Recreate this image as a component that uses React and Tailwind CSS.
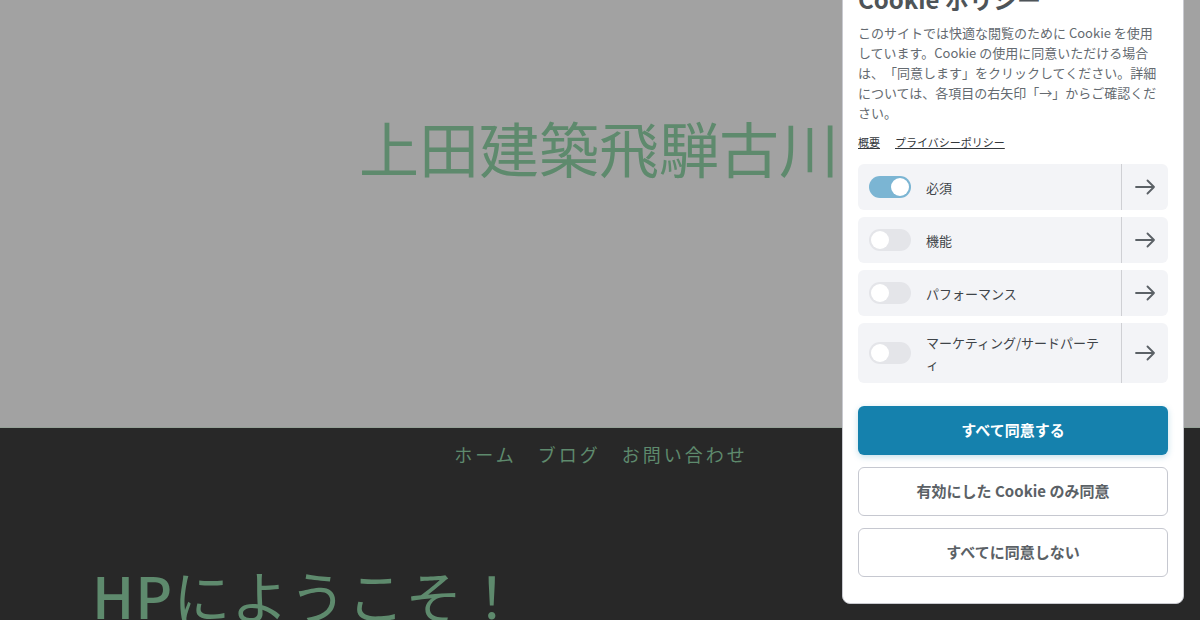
import React from 'react';

const font = { fontFamily: '"Noto Sans CJK JP", "Noto Sans", sans-serif' };

function Arrow() {
    return (
        <svg width="20" height="16" viewBox="0 0 20 16" fill="none" stroke="#5b6166" strokeWidth="1.8" strokeLinecap="round" strokeLinejoin="round">
            <path d="M1 8 H19 M12.5 1.5 L19 8 L12.5 14.5" />
        </svg>
    );
}

function Toggle({ on }) {
    return (
        <div className={`w-[42px] h-[22px] rounded-full flex items-center px-[2px] shrink-0 ${on ? 'bg-[#7bb5d3] justify-end' : 'bg-[#e4e5e9] justify-start'}`}>
            <div className="w-[18px] h-[18px] rounded-full bg-white"></div>
        </div>
    );
}

const rows = [
    { label: '必須', on: true },
    { label: '機能', on: false },
    { label: 'パフォーマンス', on: false },
    { label: 'マーケティング/サードパーティ', on: false },
];

function CookiePanel() {
    return (
        <div className="absolute top-[-34px] right-[16px] w-[342px] bg-white rounded-[8px] border border-[#c9cad0] px-[15px] pt-[16px] pb-[26px] text-[#5f6368]">
            <h2 className="text-[24px] leading-[32px] font-bold text-[#4e5458]">Cookie ポリシー</h2>
            <p className="mt-[8px] w-[305px] text-[13px] leading-[20px] text-[#646a70] [text-spacing-trim:space-all]">
                このサイトでは快適な閲覧のために Cookie を使用しています。Cookie の使用に同意いただける場合は、「同意します」をクリックしてください。詳細については、各項目の右矢印「→」からご確認ください。
            </p>
            <div className="mt-[11px] flex gap-[15px] text-[11px] leading-[16px] text-[#33373b] underline">
                <span>概要</span>
                <span>プライバシーポリシー</span>
            </div>
            <div className="mt-[14px] flex flex-col gap-[7px]">
                {rows.map((r, i) => (
                    <div key={i} className="flex bg-[#f3f4f7] rounded-[6px] min-h-[46px]">
                        <div className="flex-1 flex items-center gap-[15px] pl-[11px] pr-[12px] py-[9px]">
                            <Toggle on={r.on} />
                            <span className="text-[13px] leading-[21px] text-[#3f4449]">{r.label}</span>
                        </div>
                        <div className="w-[47px] border-l border-[#cfd0d4] flex items-center justify-center shrink-0">
                            <Arrow />
                        </div>
                    </div>
                ))}
            </div>
            <div className="mt-[23px] flex flex-col gap-[12px]">
                <button className="h-[49px] rounded-[6px] bg-[#1581ad] text-white font-bold text-[15px] shadow-[0_2px_6px_rgba(21,129,173,0.25)]">すべて同意する</button>
                <button className="h-[49px] rounded-[6px] bg-white border border-[#c6c8d0] text-[#5b6166] font-bold text-[15px]">有効にした Cookie のみ同意</button>
                <button className="h-[49px] rounded-[6px] bg-white border border-[#c6c8d0] text-[#5b6166] font-bold text-[15px]">すべてに同意しない</button>
            </div>
        </div>
    );
}

export default function App() {
    return (
        <div className="relative w-[1200px] h-[620px] overflow-hidden bg-[#282828]" style={font}>
            <header className="h-[428px] bg-[#a2a2a2] border-b border-[#95a197] flex justify-center pt-[111px]">
                <h1 className="text-[60px] leading-[72px] text-[#5e8a6d] pr-[2px]">上田建築飛騨古川</h1>
            </header>
            <nav className="flex justify-center gap-[21px] pt-[14px] pl-[2px] text-[18px] leading-[24px] tracking-[3px] text-[#5e8a6d]">
                <span>ホーム</span>
                <span>ブログ</span>
                <span>お問い合わせ</span>
            </nav>
            <section className="pl-[92px] mt-[94px]">
                <h2 className="text-[57px] leading-[68px] text-[#5e8a6d] tracking-[1px]"><span className="font-medium">HP</span>にようこそ！</h2>
            </section>
            <CookiePanel />
        </div>
    );
}
